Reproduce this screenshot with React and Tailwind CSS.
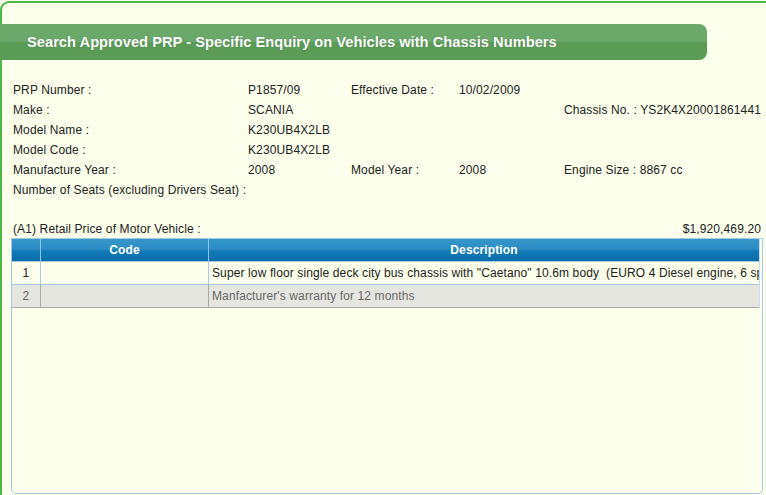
import React from 'react'

const fields = [
  ['PRP Number :', 'P1857/09', 'Effective Date :', '10/02/2009', ''],
  ['Make :', 'SCANIA', '', '', 'Chassis No. : YS2K4X20001861441'],
  ['Model Name :', 'K230UB4X2LB', '', '', ''],
  ['Model Code :', 'K230UB4X2LB', '', '', ''],
  ['Manufacture Year :', '2008', 'Model Year :', '2008', 'Engine Size : 8867 cc'],
]

const items = [
  {
    no: 1,
    code: '',
    desc: 'Super low floor single deck city bus chassis with "Caetano" 10.6m body  (EURO 4 Diesel engine, 6 speed automatic transmission)',
  },
  { no: 2, code: '', desc: "Manfacturer's warranty for 12 months" },
]

export default function App() {
  return (
    <div className="w-[766px] h-[495px] overflow-hidden bg-[#fcffec] font-['Liberation_Sans',Arial,sans-serif] text-[12px] tracking-[0.12px] text-[#222]">
      <div className="mt-px w-[800px] h-[600px] border-l-2 border-t-2 border-[#4cb848] rounded-tl-[9px]">
        {/* title bar */}
        <div className="mt-[21px] -ml-[2px] w-[707px] h-[36px] rounded-r-[8px] bg-[linear-gradient(#6aa96a_50%,#5a9c56_50%)] flex items-center pl-[27px]">
          <h1 className="text-white font-bold text-[14.7px] tracking-normal [text-shadow:0_0_1px_rgba(0,0,0,0.35)]">
            Search Approved PRP - Specific Enquiry on Vehicles with Chassis Numbers
          </h1>
        </div>

        <div className="pl-[11px] pt-[20px] w-[759px]">
          {fields.map((r, i) => (
            <div key={i} className="grid grid-cols-[235px_103px_108px_105px_1fr] leading-[20px] whitespace-nowrap">
              <span>{r[0]}</span>
              <span>{r[1]}</span>
              <span>{r[2]}</span>
              <span>{r[3]}</span>
              <span>{r[4]}</span>
            </div>
          ))}
          <div className="leading-[20px]">Number of Seats (excluding Drivers Seat) :</div>

          <div className="mt-[19px] flex justify-between leading-[20px]">
            <span>(A1) Retail Price of Motor Vehicle :</span>
            <span>$1,920,469.20</span>
          </div>

          {/* items table */}
          <div className="-mt-px -ml-[2px] w-[752px] h-[256px] border border-[#a6c9e2] rounded-b-[5px] overflow-hidden">
            <div className="w-[748px] border-r border-[#c5e0f2]">
              <div className="flex h-[23px] bg-[linear-gradient(#3596c9_0%,#2b8dc4_45%,#1179b6_55%,#0b6dab_100%)] text-white font-bold border-b border-[#a6c9e2]">
                <div className="w-[29px] border-r border-[#8ec5ea]" />
                <div className="w-[168px] border-r border-[#8ec5ea] flex items-center justify-center">Code</div>
                <div className="flex-1 flex items-center justify-center">Description</div>
              </div>
              {items.map((it, i) => (
                <div
                  key={it.no}
                  className={`flex h-[23px] border-b ${
                    i === 1 ? 'bg-[#e6e6e1] text-[#666] border-[#aaa]' : 'border-[#a6c9e2]'
                  }`}
                >
                  <div className={`w-[29px] border-r flex items-center justify-center ${i === 1 ? 'border-[#aaa]' : 'border-[#a6c9e2]'}`}>
                    {it.no}
                  </div>
                  <div className={`w-[168px] border-r ${i === 1 ? 'border-[#aaa]' : 'border-[#a6c9e2]'}`}>{it.code}</div>
                  <div className="flex-1 min-w-0 flex items-center pl-[3px] whitespace-pre overflow-hidden">{it.desc}</div>
                </div>
              ))}
            </div>
          </div>
        </div>
      </div>
    </div>
  )
}
